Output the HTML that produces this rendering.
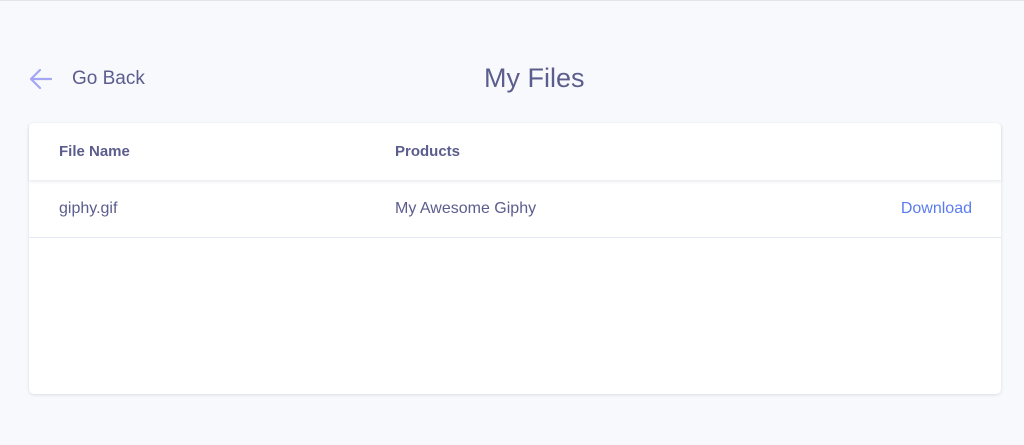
<!DOCTYPE html>
<html><head><style>
body{margin:0;width:1024px;height:445px;background:#f8f9fc;font-family:"Liberation Sans",sans-serif;position:relative;overflow:hidden;border-top:1px solid #e2e4ea;box-sizing:border-box}
.t{position:absolute;white-space:nowrap}
.card{position:absolute;left:29px;top:122px;width:972px;height:271px;background:#fff;border-radius:5px;box-shadow:0 1px 3px rgba(60,70,110,.15)}
</style></head><body>
<svg class="t" style="left:28px;top:66px" width="26" height="24" viewBox="0 0 26 24"><path d="M23 12H3M12 3L3 12l9 9" fill="none" stroke="#a3a6f3" stroke-width="2.2" stroke-linecap="round" stroke-linejoin="round"/></svg>
<div class="t" style="left:72px;top:67px;font-size:19px;color:#5b5d8d">Go Back</div>
<div class="t" style="left:484px;top:62px;font-size:27px;color:#5b5d8d">My Files</div>
<div class="card">
<div style="height:57px;box-shadow:0 2px 3px rgba(60,70,110,.1);position:relative">
<div class="t" style="left:30px;top:20px;font-size:15px;font-weight:bold;color:#5b5d8d">File Name</div>
<div class="t" style="left:366px;top:20px;font-size:15px;font-weight:bold;color:#5b5d8d">Products</div>
</div>
<div style="height:57px;border-bottom:1px solid #e3e8f2;position:relative">
<div class="t" style="left:30px;top:20px;font-size:16px;color:#5b5d8d">giphy.gif</div>
<div class="t" style="left:366px;top:20px;font-size:16px;color:#5b5d8d">My Awesome Giphy</div>
<div class="t" style="right:29px;top:20px;font-size:16px;color:#5b7cf0">Download</div>
</div>
</div>
</body></html>
